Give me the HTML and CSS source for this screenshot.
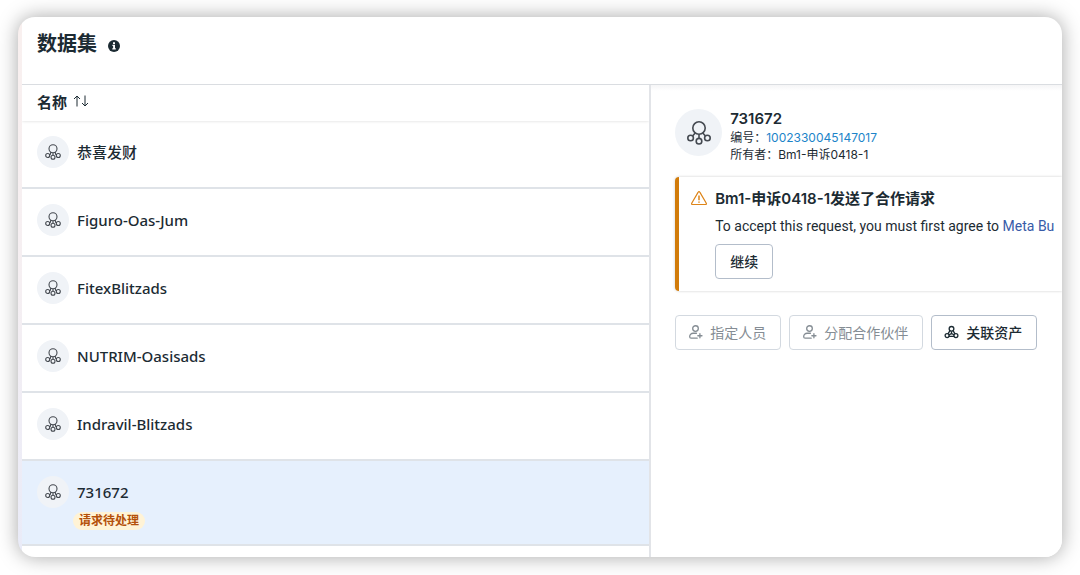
FILE: index.html
```html
<!DOCTYPE html>
<html lang="zh-CN">
<head>
  <meta charset="UTF-8">
  <meta name="viewport" content="width=device-width, initial-scale=1.0">
  <title>数据集</title>
  <link rel="stylesheet" href="styles.css">
</head>
<body>
  <svg class="sprite" aria-hidden="true">
    <symbol id="dataset" viewBox="0 0 24 24">
      <g fill="none" stroke="currentColor" stroke-width="1.6">
        <circle cx="12" cy="7" r="6.2"/>
        <circle cx="3.6" cy="17" r="2.8"/>
        <circle cx="12" cy="20.2" r="2.8"/>
        <circle cx="20.4" cy="17" r="2.8"/>
        <path d="M12 13.2v4.2M8.2 12l-2.6 3M15.8 12l2.6 3"/>
      </g>
    </symbol>
    <symbol id="dataset-small" viewBox="0 0 16 16">
      <g fill="none" stroke="currentColor" stroke-width="1.1">
        <circle cx="8" cy="4.7" r="4"/>
        <circle cx="2.7" cy="11.5" r="2"/>
        <circle cx="8" cy="13.2" r="2"/>
        <circle cx="13.3" cy="11.5" r="2"/>
        <path d="M8 8.7v2.5M5.8 8l-.4 2.2-1.2.3M10.2 8l.4 2.2 1.2.3"/>
      </g>
    </symbol>
    <symbol id="person-add" viewBox="0 0 16 16">
      <g fill="none" stroke="currentColor" stroke-width="1.4" stroke-linecap="round">
        <circle cx="8" cy="4.3" r="3"/>
        <path d="M9 9.3H5.5a3.7 3.7 0 0 0-3.7 3.7c0 1 .6 1.6 1.5 1.6h6.5M12.7 9.8v4.4M10.5 12h4.4"/>
      </g>
    </symbol>
    <symbol id="assets" viewBox="0 0 16 16">
      <g fill="none" stroke="currentColor" stroke-width="1.4">
        <circle cx="8" cy="4.6" r="2.5"/>
        <circle cx="3.3" cy="11.8" r="2.1"/>
        <circle cx="12.7" cy="11.8" r="2.1"/>
        <path d="M6.4 6.6L4.2 9.9M9.6 6.6l2.2 3.3M5.2 12.6h5.6M8 7.2v2.4l-2.8 1.4M8 9.6l2.8 1.4"/>
      </g>
    </symbol>
  </svg>

  <main class="window">
    <header class="page-header">
      <h1>数据集</h1>
      <svg class="info" viewBox="0 0 12 12" role="img" aria-label="信息">
        <circle cx="6" cy="6" r="6" fill="#1c2b33"/>
        <path d="M5 2.3h2v1.6H5zM4.4 4.8H7v3.4h.8v1.2H4.3V8.2h.8V6h-.7z" fill="#fff"/>
      </svg>
    </header>

    <div class="content">
      <section class="list">
        <table>
          <thead>
            <tr>
              <th>
                <button class="sort" type="button">名称
                  <svg viewBox="0 0 16 12" aria-hidden="true">
                    <path d="M4 11.5V1M1 4l3-3 3 3M12 .5V11M9 8l3 3 3-3" fill="none" stroke="currentColor"/>
                  </svg>
                </button>
              </th>
            </tr>
          </thead>
          <tbody>
            <tr><td><div class="item"><span class="avatar"><svg><use href="#dataset-small"/></svg></span><span class="name">恭喜发财</span></div></td></tr>
            <tr><td><div class="item"><span class="avatar"><svg><use href="#dataset-small"/></svg></span><span class="name">Figuro-Oas-Jum</span></div></td></tr>
            <tr><td><div class="item"><span class="avatar"><svg><use href="#dataset-small"/></svg></span><span class="name">FitexBlitzads</span></div></td></tr>
            <tr><td><div class="item"><span class="avatar"><svg><use href="#dataset-small"/></svg></span><span class="name">NUTRIM-Oasisads</span></div></td></tr>
            <tr><td><div class="item"><span class="avatar"><svg><use href="#dataset-small"/></svg></span><span class="name">Indravil-Blitzads</span></div></td></tr>
            <tr class="selected"><td><div class="item"><span class="avatar"><svg><use href="#dataset-small"/></svg></span><span class="name">731672</span></div><span class="tag">请求待处理</span></td></tr>
          </tbody>
        </table>
      </section>

      <section class="detail">
        <div class="summary">
          <span class="avatar large"><svg><use href="#dataset"/></svg></span>
          <div>
            <h2>731672</h2>
            <p>编号：<a href="#">1002330045147017</a></p>
            <p>所有者：Bm1-申诉0418-1</p>
          </div>
        </div>

        <div class="notice">
          <svg class="warning" viewBox="0 0 16 14" aria-hidden="true">
            <path d="M7.2 1.1a.9.9 0 0 1 1.6 0l6.5 11.1a.9.9 0 0 1-.8 1.3h-13a.9.9 0 0 1-.8-1.3z" fill="none" stroke="#dd8418" stroke-width="1.2"/>
            <path d="M8 4.6v4.6M8 10.4v1.4" stroke="#dd8418" stroke-width="1.5"/>
          </svg>
          <div class="notice-body">
            <h3>Bm1-申诉0418-1发送了合作请求</h3>
            <p>To accept this request, you must first agree to <a href="#">Meta Bu</a></p>
            <button class="btn" type="button">继续</button>
          </div>
        </div>

        <div class="actions">
          <button class="btn" type="button" disabled><svg><use href="#person-add"/></svg>指定人员</button>
          <button class="btn" type="button" disabled><svg><use href="#person-add"/></svg>分配合作伙伴</button>
          <button class="btn" type="button"><svg><use href="#assets"/></svg>关联资产</button>
        </div>
      </section>
    </div>
  </main>
</body>
</html>
```

FILE: styles.css
```css
* {
  box-sizing: border-box;
}

body {
  margin: 0;
  padding: 17px 18px 18px;
  height: 100vh;
  overflow: hidden;
  background: #fff;
  color: #1c2b33;
  font-family: Inter, 'Noto Sans CJK SC', sans-serif;
  font-size: 14px;
}

h1, h2, h3, p {
  margin: 0;
}

a {
  text-decoration: none;
}

button {
  font-family: inherit;
  color: inherit;
}

.sprite {
  display: none;
}

.window {
  display: flex;
  flex-direction: column;
  height: 100%;
  padding-left: 4px;
  overflow: hidden;
  border-radius: 17px;
  background: linear-gradient(#f9f0ef, #f5eff2 50%, #e9ebf8) left / 4px 100% no-repeat #fff;
  box-shadow: 0 0 20px rgba(0, 0, 0, 0.35);
}

.page-header {
  display: flex;
  align-items: flex-start;
  gap: 11px;
  height: 68px;
  padding: 12px 15px;
  border-bottom: 1px solid #dadde1;
}

.page-header h1 {
  font-size: 20px;
  line-height: 30px;
  font-weight: 600;
}

.info {
  width: 12px;
  height: 12px;
  margin-top: 11px;
}

.content {
  flex: 1;
  display: flex;
  min-height: 0;
}

.list {
  flex: 0 0 60.5%;
  overflow: hidden;
  border-right: 2px solid #e2e4e8;
}

table {
  width: 100%;
  border-collapse: separate;
  border-spacing: 0;
}

th {
  padding: 0 15px 4px;
  height: 36px;
  text-align: left;
  box-shadow: 0 0 3px rgba(0, 0, 0, 0.16);
}

.sort {
  display: flex;
  align-items: center;
  gap: 6px;
  padding: 0;
  border: 0;
  background: none;
  font-size: 15px;
  font-weight: 600;
}

.sort svg {
  width: 16px;
  height: 12px;
}

td {
  height: 68px;
  padding: 15px;
  border-bottom: 2px solid #dfe3e8;
  vertical-align: top;
}

.item {
  display: flex;
  align-items: center;
  gap: 8px;
}

.avatar {
  flex: none;
  display: flex;
  align-items: center;
  justify-content: center;
  width: 32px;
  height: 32px;
  border-radius: 50%;
  background: #f0f3f7;
  color: #444950;
}

.avatar svg {
  width: 16px;
  height: 16px;
}

.name {
  font-family: 'Noto Sans', 'Noto Sans CJK SC', sans-serif;
  font-size: 15px;
  line-height: 20px;
  font-weight: 500;
}

.selected td {
  height: 85px;
  padding-bottom: 14px;
  background: #e6f0fd;
}

.tag {
  display: table;
  margin: 4px 0 0 36px;
  padding: 0 6px;
  border-radius: 9px;
  background: #fff3d6;
  color: #b4500a;
  font-size: 12px;
  line-height: 18px;
  font-weight: 600;
}

.detail {
  flex: 1;
  min-width: 0;
  padding: 24px 0 0 24px;
  overflow: hidden;
  white-space: nowrap;
  background: linear-gradient(#f5f5f6, #fff 6px);
}

.summary {
  display: flex;
  align-items: flex-start;
  gap: 8px;
  padding-bottom: 14px;
}

.summary h2 {
  font-size: 15px;
  line-height: 20px;
  font-weight: 600;
}

.summary p {
  font-size: 12px;
  line-height: 17px;
}

.summary a {
  color: #1c84c9;
}

.avatar.large {
  width: 47px;
  height: 47px;
}

.large svg {
  width: 24px;
  height: 24px;
}

.notice {
  display: flex;
  gap: 8px;
  padding: 11px 0 12px 12px;
  border-left: 4px solid #d17b0a;
  border-radius: 4px 0 0 4px;
  box-shadow: 0 0 3px rgba(0, 0, 0, 0.2);
}

.warning {
  flex: none;
  width: 16px;
  height: 14px;
  margin-top: 3px;
}

.notice h3 {
  font-size: 15px;
  line-height: 22px;
  font-weight: 600;
}

.notice p {
  margin: 6px 0 8px;
  font-family: Roboto, sans-serif;
  line-height: 20px;
}

.notice a {
  color: #385ba8;
}

.btn {
  display: inline-flex;
  align-items: center;
  gap: 7px;
  height: 35px;
  padding: 0 14px 2px;
  border: 1px solid #b3bdca;
  border-radius: 4px;
  background: #fff;
  font-size: 14px;
  font-weight: 500;
}

.btn:disabled {
  border-color: #d3d9e0;
  color: #858d94;
  font-weight: 400;
}

.actions {
  display: flex;
  gap: 8px;
  padding-top: 24px;
}

.actions .btn {
  padding: 0 14px 2px 12px;
}

.actions svg {
  width: 15px;
  height: 16px;
}
```
